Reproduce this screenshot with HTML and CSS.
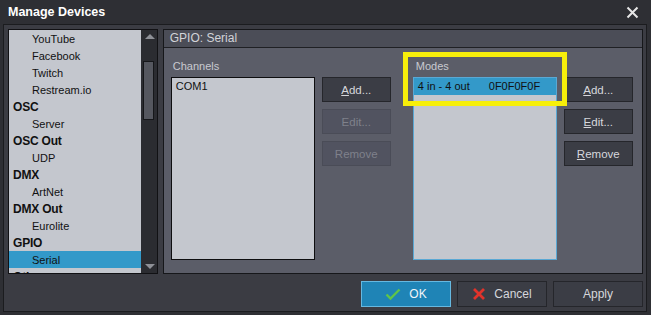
FILE: index.html
```html
<html lang="en">
  <head>
    <meta charset="UTF-8" />
    <title>Manage Devices</title>
    <link rel="stylesheet" href="styles.css">
  </head>
  <body>
    <div class="window">
      <div class="titlebar">
        <span class="title">Manage Devices</span>
        <span class="close">
          <svg width="13" height="13" viewBox="0 0 13 13">
            <path d="M1.5 1.5 L11.5 11.5 M11.5 1.5 L1.5 11.5" stroke="#e6e6e6" stroke-width="2" />
          </svg>
        </span>
      </div>
      <div class="frame">
        <div class="main">
          <div class="tree">
            <ul class="tree-items">
              <li class="child">YouTube</li>
              <li class="child">Facebook</li>
              <li class="child">Twitch</li>
              <li class="child">Restream.io</li>
              <li class="cat">OSC</li>
              <li class="child">Server</li>
              <li class="cat">OSC Out</li>
              <li class="child">UDP</li>
              <li class="cat">DMX</li>
              <li class="child">ArtNet</li>
              <li class="cat">DMX Out</li>
              <li class="child">Eurolite</li>
              <li class="cat">GPIO</li>
              <li class="child selected">Serial</li>
              <li class="cat">Other</li>
            </ul>
            <div class="scrollbar">
              <div class="arrow up"></div>
              <div class="track"><div class="thumb"></div></div>
              <div class="arrow down"></div>
            </div>
          </div>
          <div class="panel">
            <div class="panel-head">GPIO: Serial</div>
            <div class="panel-body">
              <div class="group">
                <div class="group-label">Channels</div>
                <div class="group-row">
                  <ul class="listbox">
                    <li>COM1</li>
                  </ul>
                  <div class="buttons">
                    <button class="btn"><u>A</u>dd...</button>
                    <button class="btn" disabled>Edit...</button>
                    <button class="btn" disabled>Remove</button>
                  </div>
                </div>
              </div>
              <div class="group modes">
                <div class="group-label">Modes</div>
                <div class="group-row">
                  <ul class="listbox focused">
                    <li class="selected"><span class="mode-name">4 in - 4 out</span><span>0F0F0F0F</span></li>
                  </ul>
                  <div class="buttons">
                    <button class="btn"><u>A</u>dd...</button>
                    <button class="btn"><u>E</u>dit...</button>
                    <button class="btn"><u>R</u>emove</button>
                  </div>
                </div>
                <div class="highlight"></div>
              </div>
            </div>
          </div>
        </div>
        <div class="footer">
          <button class="btn big primary">
            <svg width="16" height="14" viewBox="0 0 16 14">
              <path d="M1.5 7.5 L5.5 11.5 L14.5 2.5" fill="none" stroke="#5fc44a" stroke-width="2.4" />
            </svg>
            OK
          </button>
          <button class="btn big">
            <svg width="14" height="14" viewBox="0 0 14 14">
              <path d="M2 2 L12 12 M12 2 L2 12" stroke="#e0332b" stroke-width="2.8" />
            </svg>
            Cancel
          </button>
          <button class="btn big">Apply</button>
        </div>
      </div>
    </div>
  </body>
</html>
```

FILE: styles.css
```css
body {
  margin: 0;
  background: #2e2f34;
  font-family: "Liberation Sans", Arial, sans-serif;
  font-size: 11px;
}

.window {
  width: 651px;
  height: 315px;
  display: flex;
  flex-direction: column;
}

.titlebar {
  height: 24px;
  display: flex;
  align-items: center;
  justify-content: space-between;
  padding: 0 12px 0 8px;
  background: #2e2f34;
  box-sizing: border-box;
}

.title {
  color: #ffffff;
  font-weight: bold;
  font-size: 12.5px;
}

.close {
  display: flex;
}

.frame {
  height: 288px;
  margin: 0 4px 0 3px;
  border: 1px solid #1b1c1f;
  background: #3b3c43;
  display: flex;
  flex-direction: column;
  padding: 4px 3px 0 4px;
  box-sizing: border-box;
}

.main {
  display: flex;
  gap: 5px;
  height: 245px;
}

.tree {
  width: 150px;
  border: 1px solid #111114;
  background: #c4c7ce;
  display: flex;
  box-sizing: border-box;
  overflow: hidden;
}

.tree-items {
  list-style: none;
  margin: 0;
  padding: 0;
  flex: 1;
  color: #111;
}

.tree-items li {
  height: 17px;
  line-height: 18px;
  white-space: nowrap;
}

.tree-items .child {
  padding-left: 23px;
}

.tree-items .cat {
  padding-left: 4px;
  font-weight: bold;
  font-size: 12px;
  letter-spacing: -0.2px;
}

.tree-items .selected {
  background: #3399c9;
}

.scrollbar {
  width: 15px;
  background: #2b2c31;
  display: flex;
  flex-direction: column;
  border-left: 1px solid #2b2c31;
}

.arrow {
  height: 14px;
  position: relative;
}

.arrow::after {
  content: "";
  position: absolute;
  left: 3px;
  border-left: 5px solid transparent;
  border-right: 5px solid transparent;
}

.arrow.up::after {
  top: 4px;
  border-bottom: 5px solid #8e9097;
}

.arrow.down::after {
  top: 5px;
  border-top: 5px solid #8e9097;
}

.track {
  flex: 1;
  padding-top: 17px;
}

.thumb {
  width: 9px;
  height: 57px;
  margin-left: 1px;
  background: #55575f;
  border: 1px solid #16171a;
}

.panel {
  width: 481px;
  border: 1px solid #16171a;
  background: #5b5d68;
  display: flex;
  flex-direction: column;
  box-sizing: border-box;
}

.panel-head {
  height: 17px;
  line-height: 17px;
  padding-left: 6px;
  color: #d2d3d8;
  font-size: 12px;
  background: #4b4d57;
  border-bottom: 1px solid #1f2024;
}

.panel-body {
  display: flex;
  gap: 22px;
  padding: 12px 7px 0 7px;
}

.group {
  position: relative;
}

.group-label {
  color: #c9cad0;
  height: 17px;
  line-height: 13px;
  padding-left: 2px;
}

.modes .group-label {
  padding-left: 3px;
}

.group-row {
  display: flex;
  gap: 7px;
}

.listbox {
  list-style: none;
  margin: 0;
  padding: 0;
  width: 144px;
  height: 183px;
  border: 1px solid #0e0e10;
  background: #c4c7ce;
  box-sizing: border-box;
  color: #111;
}

.listbox li {
  height: 17px;
  line-height: 17px;
  padding-left: 4px;
  display: flex;
}

.listbox.focused {
  border-color: #5aa8d4;
}

.listbox .selected {
  background: #3399c9;
}

.mode-name {
  width: 71px;
}

.buttons {
  display: flex;
  flex-direction: column;
  gap: 7px;
}

.btn {
  width: 69px;
  height: 25px;
  padding: 0;
  background: #3b3d45;
  border: 1px solid #25262b;
  color: #d6d7dc;
  font-family: "Liberation Sans", Arial, sans-serif;
  font-size: 11.5px;
}

.btn:disabled {
  background: #515360;
  border-color: #4a4c57;
  color: #7f818b;
}

.highlight {
  position: absolute;
  left: -10px;
  top: -8px;
  width: 164px;
  height: 54px;
  border: 5px solid #f7ef0a;
  box-sizing: border-box;
  pointer-events: none;
}

.footer {
  display: flex;
  justify-content: flex-end;
  gap: 6px;
  padding-top: 7px;
}

.btn.big {
  width: 90px;
  height: 26px;
  font-size: 12px;
  display: flex;
  align-items: center;
  justify-content: center;
  gap: 8px;
}

.btn.primary {
  background: #1f84b6;
  border-color: #66b8e0;
  color: #f2f5f8;
}
```
